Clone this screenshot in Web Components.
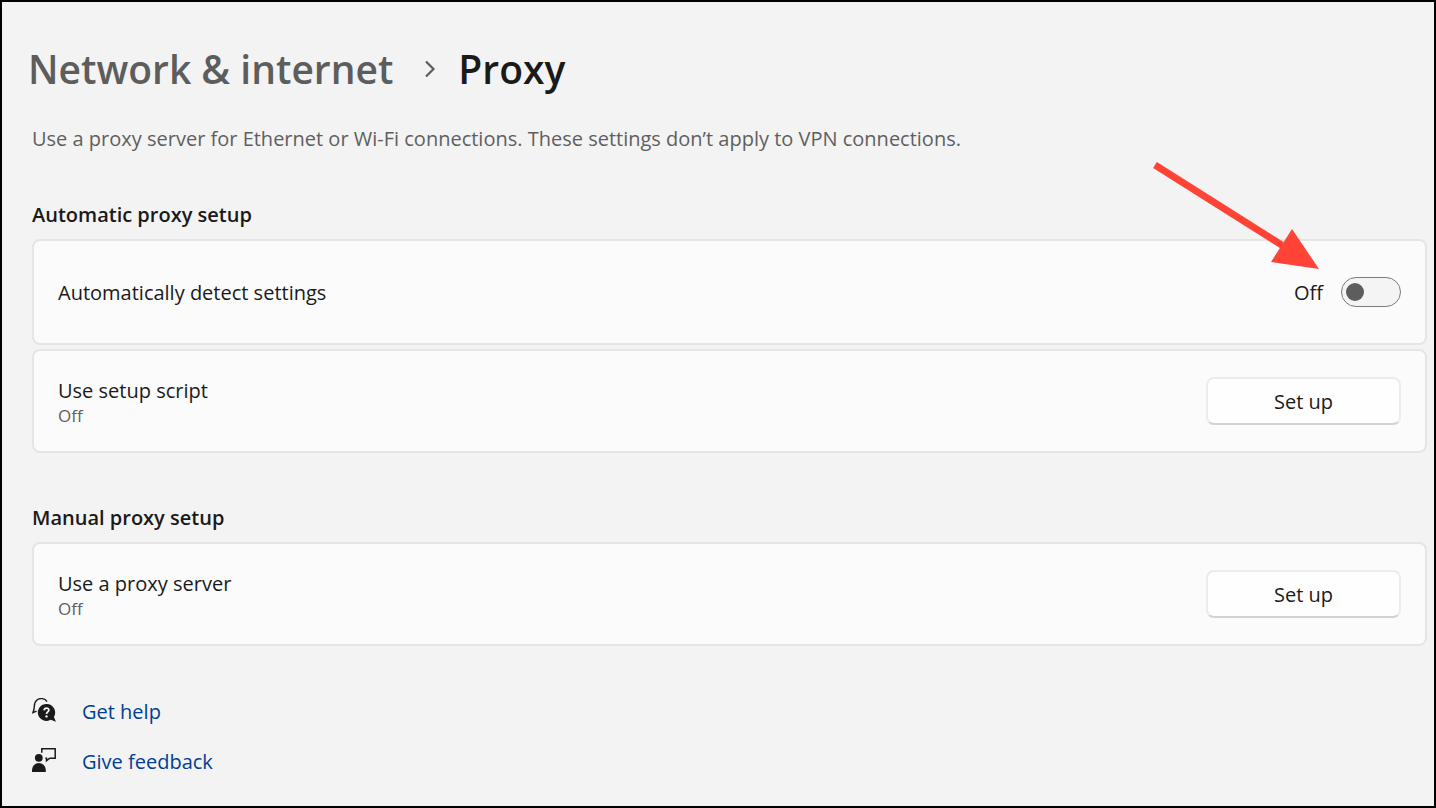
<!DOCTYPE html>
<html lang="en">
<head>
<meta charset="utf-8">
<meta name="viewport" content="width=device-width, initial-scale=1">
<title>Network &amp; internet - Proxy</title>
<style>
  body { margin: 0; background: #f3f3f3; }
</style>
</head>
<body>
<proxy-page></proxy-page>
<script>
const define = (name, html, setup) => {
  const template = document.createElement('template');
  template.innerHTML = html;
  customElements.define(name, class extends HTMLElement {
    constructor() {
      super();
      this.attachShadow({ mode: 'open' }).append(template.content.cloneNode(true));
    }
    connectedCallback() { if (setup) setup(this, this.shadowRoot); }
  });
};

define('page-breadcrumb', `
  <style>
    :host { display: block; }
    nav { display: flex; align-items: center; font-size: 39px; line-height: 54px; font-weight: 600; }
    a { color: #5d5d5d; text-decoration: none; }
    h1 { margin: 0; font: inherit; color: #1a1a1a; }
    svg { width: 12px; height: 18px; margin: 0 21px 0 32px; }
  </style>
  <nav aria-label="Breadcrumb">
    <a href="#network"><slot name="parent"></slot></a>
    <svg viewBox="0 0 12 18" aria-hidden="true"><path d="M1 1.5 8.5 9 1 16.5" fill="none" stroke="#5d5d5d" stroke-width="2.2"/></svg>
    <h1><slot></slot></h1>
  </nav>`);

define('settings-group', `
  <style>
    :host { display: block; }
    h2 { margin: 0 0 10px; font-size: 20px; line-height: 28px; font-weight: 600; }
    .cards { display: grid; gap: 4px; }
  </style>
  <section>
    <h2><slot name="title"></slot></h2>
    <div class="cards"><slot></slot></div>
  </section>`);

define('setting-card', `
  <style>
    :host {
      display: flex; align-items: center; justify-content: space-between; gap: 24px;
      box-sizing: border-box; min-height: 104px; padding: 24px;
      background: #fbfbfb; border: 2px solid #e5e5e5; border-radius: 8px;
    }
    .text { padding-top: 2px; }
    .name { font-size: 20px; line-height: 28px; }
    .state { font-size: 17px; line-height: 22px; color: #5f5f5f; }
  </style>
  <div class="text">
    <div class="name"><slot name="name"></slot></div>
    <div class="state"><slot name="state"></slot></div>
  </div>
  <slot></slot>`);

define('setup-button', `
  <style>
    :host { display: block; }
    button {
      box-sizing: border-box; width: 195px; height: 48px; padding: 2px 0 0;
      font: inherit; font-size: 20px; line-height: 28px; color: #1a1a1a;
      background: #fefefe; border: 2px solid #ececec; border-bottom-color: #d2d2d2; border-radius: 8px;
    }
  </style>
  <button type="button"><slot></slot></button>`);

define('toggle-switch', `
  <style>
    :host { display: block; }
    label { display: flex; align-items: center; gap: 18px; font-size: 20px; line-height: 28px; }
    span { padding-top: 2px; }
    input {
      appearance: none; box-sizing: border-box; width: 60px; height: 30px; margin: 0;
      display: flex; align-items: center; padding: 0 4px;
      background: #f4f4f4; border: 1px solid #7c7c7c; border-radius: 15px;
    }
    input::before { content: ""; width: 18px; height: 18px; border-radius: 50%; background: #5d5d5d; }
    input:checked { justify-content: flex-end; background: #003e92; }
    input:checked::before { background: #ffffff; }
  </style>
  <label><span>Off</span><input type="checkbox" role="switch"></label>`,
  (host, root) => {
    const input = root.querySelector('input');
    input.setAttribute('aria-description', host.getAttribute('label'));
    input.addEventListener('change', () => {
      root.querySelector('span').textContent = input.checked ? 'On' : 'Off';
    });
  });

define('pointer-arrow', `
  <style>
    :host { position: absolute; right: 106px; bottom: 74px; width: 166px; height: 108px; pointer-events: none; }
    svg { display: block; width: 100%; height: 100%; }
  </style>
  <svg viewBox="1153 161 166 108" aria-hidden="true">
    <path d="M1155 165 1288 249" stroke="#ff4336" stroke-width="7"/>
    <path d="M1319 269 1292 229 1271 262Z" fill="#ff4336"/>
  </svg>`);

define('help-link', `
  <style>
    :host { display: flex; }
    a { display: flex; align-items: center; gap: 26px; font-size: 20px; line-height: 28px; color: #003e92; text-decoration: none; }
    span { padding-top: 4px; }
    ::slotted(svg) { width: 24px; height: 24px; flex: none; }
  </style>
  <a href="#help"><slot name="icon"></slot><span><slot></slot></span></a>`);

define('proxy-page', `
  <style>
    :host {
      display: block; box-sizing: border-box; min-height: 100vh; padding: 40px 7px 20px 30px;
      border: 2px solid #000; background: #f3f3f3; color: #1a1a1a;
      font-family: "Open Sans", "Noto Sans", sans-serif;
    }
    page-breadcrumb { margin-left: -4px; }
    .intro { margin: 29px 0 48px; font-size: 20px; line-height: 28px; color: #5f5f5f; }
    .tall { position: relative; min-height: 106px; }
    .groups { display: grid; gap: 51px; }
    footer { display: grid; gap: 18px; margin-top: 48px; }
  </style>
  <header>
    <page-breadcrumb><span slot="parent">Network &amp; internet</span>Proxy</page-breadcrumb>
    <p class="intro">Use a proxy server for Ethernet or Wi-Fi connections. These settings don’t apply to VPN connections.</p>
  </header>
  <main class="groups">
    <settings-group>
      <span slot="title">Automatic proxy setup</span>
      <setting-card class="tall">
        <span slot="name">Automatically detect settings</span>
        <toggle-switch label="Automatically detect settings"></toggle-switch>
        <pointer-arrow></pointer-arrow>
      </setting-card>
      <setting-card>
        <span slot="name">Use setup script</span><span slot="state">Off</span>
        <setup-button>Set up</setup-button>
      </setting-card>
    </settings-group>
    <settings-group>
      <span slot="title">Manual proxy setup</span>
      <setting-card>
        <span slot="name">Use a proxy server</span><span slot="state">Off</span>
        <setup-button>Set up</setup-button>
      </setting-card>
    </settings-group>
  </main>
  <footer>
    <help-link>
      <svg slot="icon" viewBox="0 0 24 24" aria-hidden="true">
        <path d="M15 3.600C13 .2 8-.3 5 2 2.800 3.700 2.300 6 2.300 8.500c0 2.500-.3 3.500-1.400 6.200l3.700-1.500" fill="none" stroke="#1a1a1a" stroke-width="1.400"/>
        <path d="M14.500 6a8.500 8.500 0 1 0 4.200 15.800L24 23.800l-2.100-4.900A8.500 8.500 0 0 0 14.500 6Z" fill="#1a1a1a"/>
        <path d="M12.200 12.400c.1-3.200 4.800-3 4.600-.2-.1 1.700-2.300 1.900-2.300 3.900" fill="none" stroke="#f3f3f3" stroke-width="1.800"/>
        <circle cx="14.500" cy="18.400" r="1.200" fill="#f3f3f3"/>
      </svg>Get help</help-link>
    <help-link>
      <svg slot="icon" viewBox="0 0 24 24" aria-hidden="true">
        <circle cx="6.800" cy="9.800" r="3.900" fill="#1a1a1a"/>
        <path d="M0 24v-2.200a6.900 6.900 0 0 1 13.800 0V24Z" fill="#1a1a1a"/>
        <path d="M9.800 4.800V.8h13.400v9.400h-5.400l-3.300 2.500v-2.500h-1.200" fill="none" stroke="#1a1a1a" stroke-width="1.500"/>
      </svg>Give feedback</help-link>
  </footer>`);
</script>
</body>
</html>
